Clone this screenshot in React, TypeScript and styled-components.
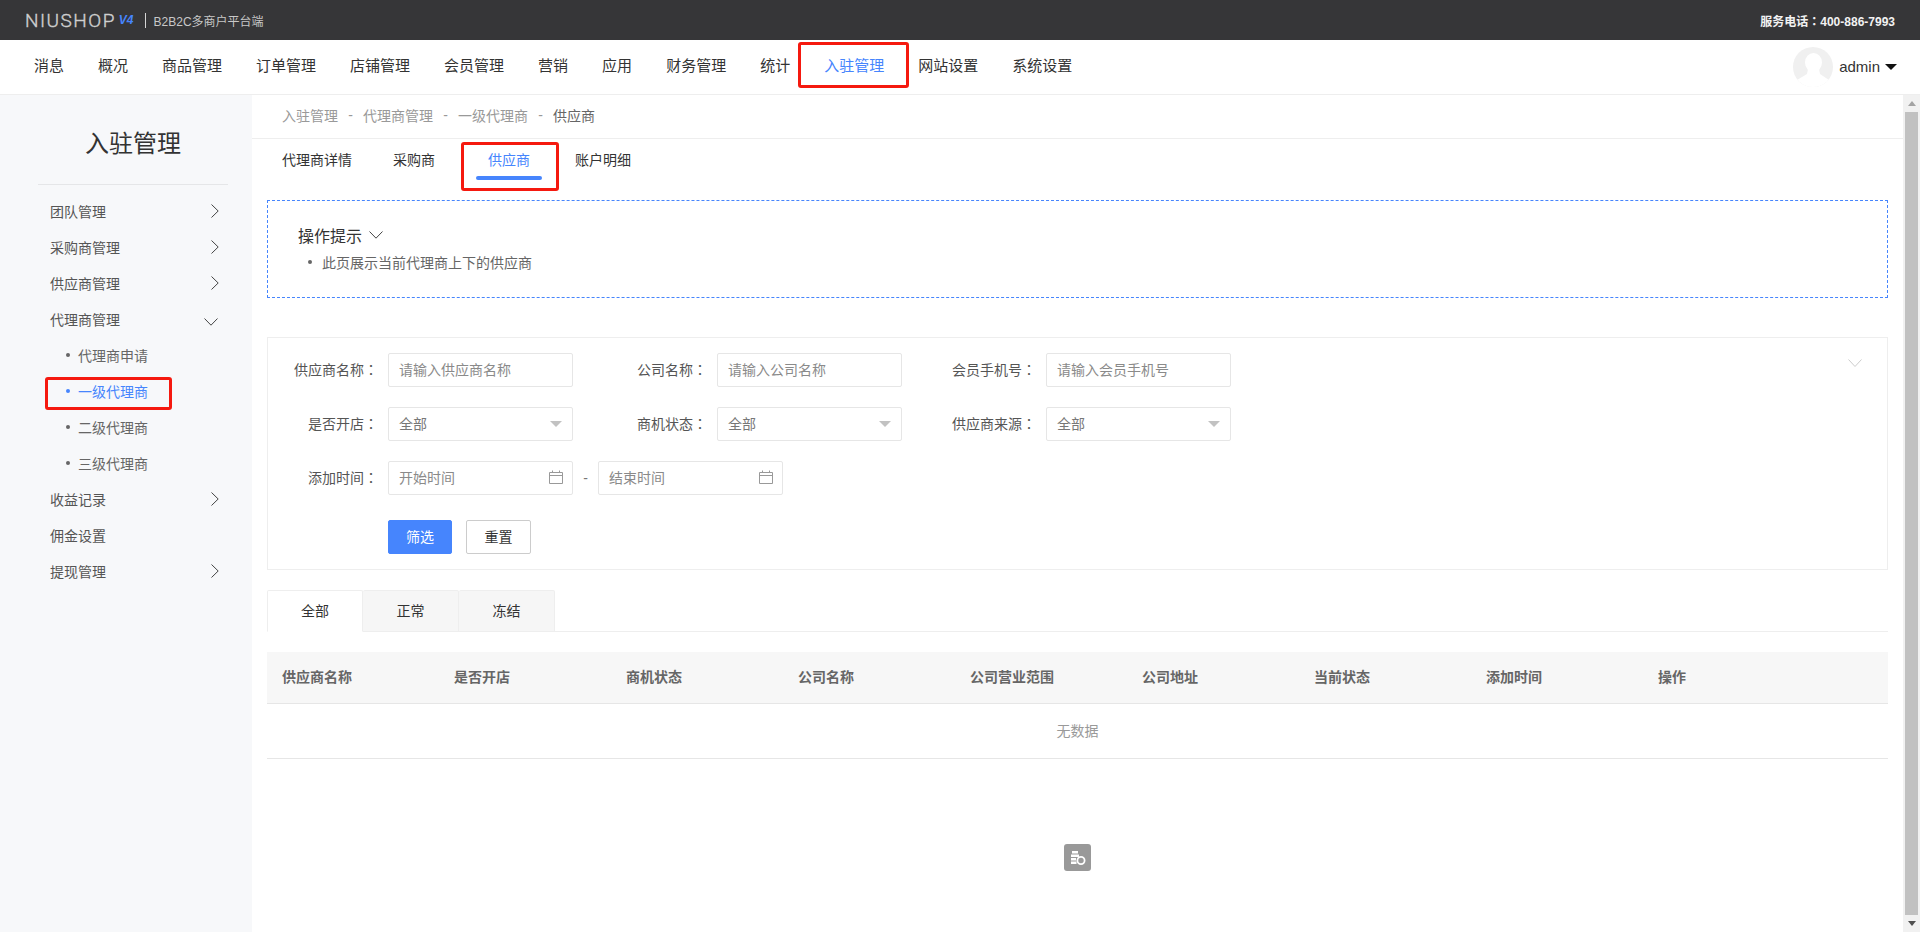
import React, { FC } from "react";
import styled, { createGlobalStyle } from "styled-components";

const blue = "#4685fd";
const red = "#f5190f";

const GlobalStyle = createGlobalStyle`
    html, body {
        margin: 0;
        height: 100%;
        overflow: hidden;
        background: #fff;
    }

    * {
        box-sizing: border-box;
    }

    body, input, button {
        font-family: "Liberation Sans", "Noto Sans CJK SC", sans-serif;
        font-size: 14px;
        color: #333;
    }
`;

const Page = styled.div`
    display: flex;
    flex-direction: column;
    height: 932px;
`;

const TopBar = styled.div`
    display: flex;
    align-items: center;
    justify-content: space-between;
    flex: none;
    height: 40px;
    padding: 0 25px;
    background: #363638;
`;

const Brand = styled.div`
    display: flex;
    align-items: center;
`;

const LogoText = styled.span`
    font-family: "Roboto", sans-serif;
    font-size: 19px;
    font-weight: 300;
    letter-spacing: 1.5px;
    color: #cfcfcf;
    -webkit-text-stroke: 0.4px #cfcfcf;
`;

const LogoVersion = styled.span`
    margin-left: 3px;
    font-size: 12px;
    font-weight: 700;
    font-style: italic;
    color: ${blue};
`;

const BrandDivider = styled.span`
    width: 1px;
    height: 15px;
    margin: 0 8px 0 11px;
    background: #d5d5d5;
`;

const BrandText = styled.span`
    font-size: 12px;
    color: #c8c8c8;
`;

const Phone = styled.span`
    font-size: 12px;
    font-weight: 700;
    color: #f2f2f2;
`;

// the reference draws the full-width colon centred, as the TC face does
const Colon = styled.span`
    font-family: "Noto Sans CJK TC", sans-serif;
`;

const NavBar = styled.div`
    display: flex;
    align-items: stretch;
    flex: none;
    height: 55px;
    padding: 0 23px 0 17px;
    border-bottom: 1px solid #eee;
    background: #fff;
`;

const NavItem = styled.div<{ $active?: boolean }>`
    position: relative;
    display: flex;
    align-items: center;
    padding: 0 17px 5px;
    font-size: 15px;
    color: ${props => props.$active ? blue : "#333"};
`;

const UserBox = styled.div`
    display: flex;
    align-items: center;
    margin-left: auto;
`;

const Avatar = styled.svg`
    width: 40px;
    height: 40px;
    margin: 0 6px 0 1px;
`;

const UserName = styled.span`
    padding-bottom: 2px;
    font-size: 15px;
    color: #333;
`;

const UserCaret = styled.span`
    width: 0;
    height: 0;
    margin-left: 5px;
    border-left: 6px solid transparent;
    border-right: 6px solid transparent;
    border-top: 6px solid #111;
`;

const Mark = styled.span`
    position: absolute;
    border: 3px solid ${red};
    border-radius: 3px;
    pointer-events: none;
`;

const NavMark = styled(Mark)`
    top: 2px;
    bottom: 6px;
    left: -9px;
    right: -8px;
`;

const TabMark = styled(Mark)`
    top: 3px;
    bottom: -7px;
    left: -15px;
    right: -17px;
`;

const SideMark = styled(Mark)`
    top: 3px;
    bottom: 0;
    left: 45px;
    width: 127px;
`;

const Main = styled.div`
    display: flex;
    flex: 1;
    min-height: 0;
`;

const Sidebar = styled.div`
    flex: none;
    width: 252px;
    background: #f7f8fa;
`;

const SideTitle = styled.div`
    display: flex;
    align-items: center;
    justify-content: center;
    height: 90px;
    margin: 0 24px 0 38px;
    padding-top: 4px;
    border-bottom: 1px solid #e5e6e8;
    font-size: 24px;
    color: #333;
`;

const SideMenu = styled.div`
    padding-top: 9px;
`;

const SideRow = styled.div`
    display: flex;
    align-items: center;
    justify-content: space-between;
    height: 36px;
    padding: 0 33px 2px 50px;
    color: #555;
`;

const SideSubRow = styled.div<{ $active?: boolean }>`
    position: relative;
    display: flex;
    align-items: center;
    height: 36px;
    padding: 0 0 2px 66px;
    color: ${props => props.$active ? blue : "#666"};

    &::before {
        content: "";
        width: 4px;
        height: 4px;
        margin-right: 8px;
        border-radius: 50%;
        background: ${props => props.$active ? blue : "#666"};
    }
`;

const Content = styled.div`
    position: relative;
    flex: 1;
    min-width: 0;
`;

const Breadcrumb = styled.div`
    display: flex;
    align-items: center;
    height: 44px;
    padding: 0 0 3px 30px;
    border-bottom: 1px solid #eee;
    color: #999;
`;

const CrumbSep = styled.span`
    width: 25px;
    text-align: center;
`;

const CrumbCurrent = styled.span`
    color: #666;
`;

const PageBody = styled.div`
    padding: 0 15px;
`;

const PageTabs = styled.div`
    display: flex;
    gap: 41px;
    height: 45px;
    padding-left: 15px;
`;

const PageTab = styled.div<{ $active?: boolean }>`
    position: relative;
    display: flex;
    align-items: center;
    padding-bottom: 5px;
    color: ${props => props.$active ? blue : "#333"};

    ${props => props.$active ? `
        margin-right: -8px;
        padding-left: 12px;
        padding-right: 12px;

        &::after {
            content: "";
            position: absolute;
            left: 0;
            right: 0;
            bottom: 4px;
            height: 4px;
            border-radius: 2px;
            background: ${blue};
        }
    ` : ""}
`;

const TipBox = styled.div`
    height: 98px;
    margin-top: 16px;
    padding: 20px 30px;
    border: 1px dashed ${blue};
`;

const TipTitle = styled.div`
    display: flex;
    align-items: center;
    gap: 7px;
    height: 28px;
    font-size: 16px;
`;

const TipLine = styled.div`
    display: flex;
    align-items: center;
    height: 28px;
    padding: 0 0 2px 10px;
    color: #666;

    &::before {
        content: "";
        width: 4px;
        height: 4px;
        margin-right: 10px;
        border-radius: 50%;
        background: #666;
    }
`;

const FilterBox = styled.div`
    position: relative;
    height: 233px;
    margin-top: 39px;
    padding-top: 15px;
    border: 1px solid #eee;
`;

const FilterRow = styled.div`
    display: flex;
    gap: 24px;
    margin-bottom: 20px;
`;

const FilterItem = styled.div`
    display: flex;
    align-items: center;
    width: 305px;
`;

const FilterLabel = styled.label`
    flex: none;
    width: 120px;
    padding: 0 10px 2px 0;
    text-align: right;
    color: #555;
`;

const TextInput = styled.input`
    width: 185px;
    height: 34px;
    padding: 0 10px;
    border: 1px solid #e6e6e6;
    border-radius: 2px;
    outline: none;
    background: #fff;

    &::placeholder {
        color: #8a8a8a;
        opacity: 1;
    }
`;

const SelectBox = styled.div`
    display: flex;
    align-items: center;
    justify-content: space-between;
    width: 185px;
    height: 34px;
    padding: 0 10px 2px;
    border: 1px solid #e6e6e6;
    border-radius: 2px;
    color: #777;

    &::after {
        content: "";
        margin-top: 2px;
        border-left: 6px solid transparent;
        border-right: 6px solid transparent;
        border-top: 6px solid #c2c2c2;
    }
`;

const DateBox = styled.div`
    display: flex;
    align-items: center;
    justify-content: space-between;
    flex: none;
    width: 185px;
    height: 34px;
    padding: 0 9px 2px 10px;
    border: 1px solid #e6e6e6;
    border-radius: 2px;
    color: #8a8a8a;
`;

const DateDash = styled.span`
    flex: none;
    width: 25px;
    text-align: center;
    color: #777;
`;

const ButtonRow = styled.div`
    display: flex;
    gap: 14px;
    margin-top: 25px;
    padding-left: 120px;
`;

const FilterButton = styled.button<{ $primary?: boolean }>`
    width: ${props => props.$primary ? "64px" : "65px"};
    height: 34px;
    padding: 0 0 2px;
    border: 1px solid ${props => props.$primary ? blue : "#ccc"};
    border-radius: 2px;
    background: ${props => props.$primary ? blue : "#fff"};
    color: ${props => props.$primary ? "#fff" : "#333"};
`;

const CollapseIcon = styled.svg`
    position: absolute;
    top: 21px;
    right: 25px;
    width: 14px;
    height: 9px;
`;

const StatusTabs = styled.div`
    display: flex;
    margin-top: 20px;
    border-bottom: 1px solid #eee;
`;

const StatusTab = styled.div<{ $active?: boolean }>`
    display: flex;
    align-items: center;
    justify-content: center;
    width: 96px;
    height: 42px;
    margin-bottom: -1px;
    padding-bottom: 2px;
    border: 1px solid #eee;
    border-left-width: ${props => props.$active ? "1px" : "0"};
    border-bottom-color: ${props => props.$active ? "#fff" : "#eee"};
    border-radius: 2px 2px 0 0;
    background: ${props => props.$active ? "#fff" : "#f6f6f6"};
    color: #333;
`;

const DataTable = styled.table`
    width: 100%;
    margin-top: 20px;
    border-collapse: collapse;
    table-layout: fixed;
`;

const HeadCell = styled.th`
    width: 172px;
    height: 51px;
    padding: 0 0 2px 15px;
    border-bottom: 1px solid #e6e6e6;
    background: #f7f7f7;
    text-align: left;
    font-size: 14px;
    font-weight: 700;
    color: #666;

    &:last-child {
        width: auto;
    }
`;

const EmptyCell = styled.td`
    height: 55px;
    padding: 0 0 2px;
    border-bottom: 1px solid #e6e6e6;
    text-align: center;
    color: #999;
`;

const FloatIcon = styled.svg`
    position: absolute;
    top: 749px;
    left: 812px;
    width: 27px;
    height: 27px;
`;

const ScrollTrack = styled.div`
    display: flex;
    flex-direction: column;
    align-items: center;
    flex: none;
    width: 17px;
    background: #f1f1f1;
`;

const ScrollArrow = styled.div`
    display: flex;
    align-items: center;
    justify-content: center;
    flex: none;
    width: 100%;
    height: 17px;
`;

const ScrollUp = styled.span`
    border-left: 4px solid transparent;
    border-right: 4px solid transparent;
    border-bottom: 5px solid #a3a3a3;
`;

const ScrollDown = styled.span`
    border-left: 4px solid transparent;
    border-right: 4px solid transparent;
    border-top: 5px solid #505050;
`;

const ScrollThumb = styled.div`
    flex: 1;
    width: 13px;
    background: #c1c1c1;
`;

const ChevronRight = () => (
    <svg width="8" height="14" viewBox="0 0 8 14" fill="none" stroke="#444" strokeWidth="1">
        <path d="M0.5 0.5L7.2 7L0.5 13.5" />
    </svg>
);

const ChevronDown: FC<{ className?: string }> = ({ className }) => (
    <svg className={className} width="14" height="8" viewBox="0 0 14 8" fill="none" stroke="#444" strokeWidth="1">
        <path d="M0.5 0.5L7 7.2L13.5 0.5" />
    </svg>
);

const SideChevronDown = styled(ChevronDown)`
    margin: 5px 1px 0 0;
`;

const CalendarIcon = () => (
    <svg width="14" height="14" viewBox="0 0 14 14" fill="none" stroke="#999" strokeWidth="1">
        <path d="M0.5 2.5H13.5V13.5H0.5Z" />
        <path d="M0.5 5.5H13.5M3.5 0.5V2.5M10.5 0.5V2.5" />
    </svg>
);

const navItems = ["消息", "概况", "商品管理", "订单管理", "店铺管理", "会员管理", "营销", "应用", "财务管理", "统计", "入驻管理", "网站设置", "系统设置"];
const columns = ["供应商名称", "是否开店", "商机状态", "公司名称", "公司营业范围", "公司地址", "当前状态", "添加时间", "操作"];

const App: FC = () => {
    return (
        <Page>
            <GlobalStyle />
            <TopBar>
                <Brand>
                    <LogoText>NIUSHOP</LogoText>
                    <LogoVersion>V4</LogoVersion>
                    <BrandDivider />
                    <BrandText>B2B2C多商户平台端</BrandText>
                </Brand>
                <Phone>服务电话<Colon>：</Colon>400-886-7993</Phone>
            </TopBar>
            <NavBar>
                {navItems.map(item => (
                    <NavItem key={item} $active={item === "入驻管理"}>
                        {item}
                        {item === "入驻管理" && <NavMark />}
                    </NavItem>
                ))}
                <UserBox>
                    <Avatar viewBox="0 0 40 40">
                        <defs>
                            <clipPath id="avatar-clip">
                                <circle cx="20" cy="20" r="20" />
                            </clipPath>
                        </defs>
                        <circle cx="20" cy="20" r="20" fill="#f0f0f0" />
                        <g clipPath="url(#avatar-clip)" fill="#fff">
                            <ellipse cx="20.5" cy="15.5" rx="8.5" ry="9.5" />
                            <path d="M15 22H26L27 27L36 33V40H4V33L14 27Z" />
                        </g>
                    </Avatar>
                    <UserName>admin</UserName>
                    <UserCaret />
                </UserBox>
            </NavBar>
            <Main>
                <Sidebar>
                    <SideTitle>入驻管理</SideTitle>
                    <SideMenu>
                        <SideRow>团队管理<ChevronRight /></SideRow>
                        <SideRow>采购商管理<ChevronRight /></SideRow>
                        <SideRow>供应商管理<ChevronRight /></SideRow>
                        <SideRow>代理商管理<SideChevronDown /></SideRow>
                        <SideSubRow>代理商申请</SideSubRow>
                        <SideSubRow $active>一级代理商<SideMark /></SideSubRow>
                        <SideSubRow>二级代理商</SideSubRow>
                        <SideSubRow>三级代理商</SideSubRow>
                        <SideRow>收益记录<ChevronRight /></SideRow>
                        <SideRow>佣金设置</SideRow>
                        <SideRow>提现管理<ChevronRight /></SideRow>
                    </SideMenu>
                </Sidebar>
                <Content>
                    <Breadcrumb>
                        <span>入驻管理</span>
                        <CrumbSep>-</CrumbSep>
                        <span>代理商管理</span>
                        <CrumbSep>-</CrumbSep>
                        <span>一级代理商</span>
                        <CrumbSep>-</CrumbSep>
                        <CrumbCurrent>供应商</CrumbCurrent>
                    </Breadcrumb>
                    <PageBody>
                        <PageTabs>
                            <PageTab>代理商详情</PageTab>
                            <PageTab>采购商</PageTab>
                            <PageTab $active>供应商<TabMark /></PageTab>
                            <PageTab>账户明细</PageTab>
                        </PageTabs>
                        <TipBox>
                            <TipTitle>操作提示<ChevronDown /></TipTitle>
                            <TipLine>此页展示当前代理商上下的供应商</TipLine>
                        </TipBox>
                        <FilterBox>
                            <FilterRow>
                                <FilterItem>
                                    <FilterLabel>供应商名称<Colon>：</Colon></FilterLabel>
                                    <TextInput placeholder="请输入供应商名称" />
                                </FilterItem>
                                <FilterItem>
                                    <FilterLabel>公司名称<Colon>：</Colon></FilterLabel>
                                    <TextInput placeholder="请输入公司名称" />
                                </FilterItem>
                                <FilterItem>
                                    <FilterLabel>会员手机号<Colon>：</Colon></FilterLabel>
                                    <TextInput placeholder="请输入会员手机号" />
                                </FilterItem>
                            </FilterRow>
                            <FilterRow>
                                <FilterItem>
                                    <FilterLabel>是否开店<Colon>：</Colon></FilterLabel>
                                    <SelectBox>全部</SelectBox>
                                </FilterItem>
                                <FilterItem>
                                    <FilterLabel>商机状态<Colon>：</Colon></FilterLabel>
                                    <SelectBox>全部</SelectBox>
                                </FilterItem>
                                <FilterItem>
                                    <FilterLabel>供应商来源<Colon>：</Colon></FilterLabel>
                                    <SelectBox>全部</SelectBox>
                                </FilterItem>
                            </FilterRow>
                            <FilterRow>
                                <FilterItem>
                                    <FilterLabel>添加时间<Colon>：</Colon></FilterLabel>
                                    <DateBox>开始时间<CalendarIcon /></DateBox>
                                    <DateDash>-</DateDash>
                                    <DateBox>结束时间<CalendarIcon /></DateBox>
                                </FilterItem>
                            </FilterRow>
                            <ButtonRow>
                                <FilterButton $primary>筛选</FilterButton>
                                <FilterButton>重置</FilterButton>
                            </ButtonRow>
                            <CollapseIcon viewBox="0 0 14 9" fill="none" stroke="#ccc" strokeWidth="1">
                                <path d="M0.5 0.5L7 7.5L13.5 0.5" />
                            </CollapseIcon>
                        </FilterBox>
                        <StatusTabs>
                            <StatusTab $active>全部</StatusTab>
                            <StatusTab>正常</StatusTab>
                            <StatusTab>冻结</StatusTab>
                        </StatusTabs>
                        <DataTable>
                            <thead>
                                <tr>
                                    {columns.map(c => <HeadCell key={c}>{c}</HeadCell>)}
                                </tr>
                            </thead>
                            <tbody>
                                <tr>
                                    <EmptyCell colSpan={9}>无数据</EmptyCell>
                                </tr>
                            </tbody>
                        </DataTable>
                    </PageBody>
                    <FloatIcon viewBox="0 0 27 27">
                        <rect width="27" height="27" rx="3" fill="#999" />
                        <path d="M8 7H14V9.5H8ZM7 10.5H15V13H7ZM7 14H12V16.5H7ZM7 17.5H12.5V20H7Z" fill="#fff" />
                        <circle cx="17" cy="16.5" r="3.6" fill="none" stroke="#fff" strokeWidth="1.8" />
                    </FloatIcon>
                </Content>
                <ScrollTrack>
                    <ScrollArrow><ScrollUp /></ScrollArrow>
                    <ScrollThumb />
                    <ScrollArrow><ScrollDown /></ScrollArrow>
                </ScrollTrack>
            </Main>
        </Page>
    );
};

export default App;
